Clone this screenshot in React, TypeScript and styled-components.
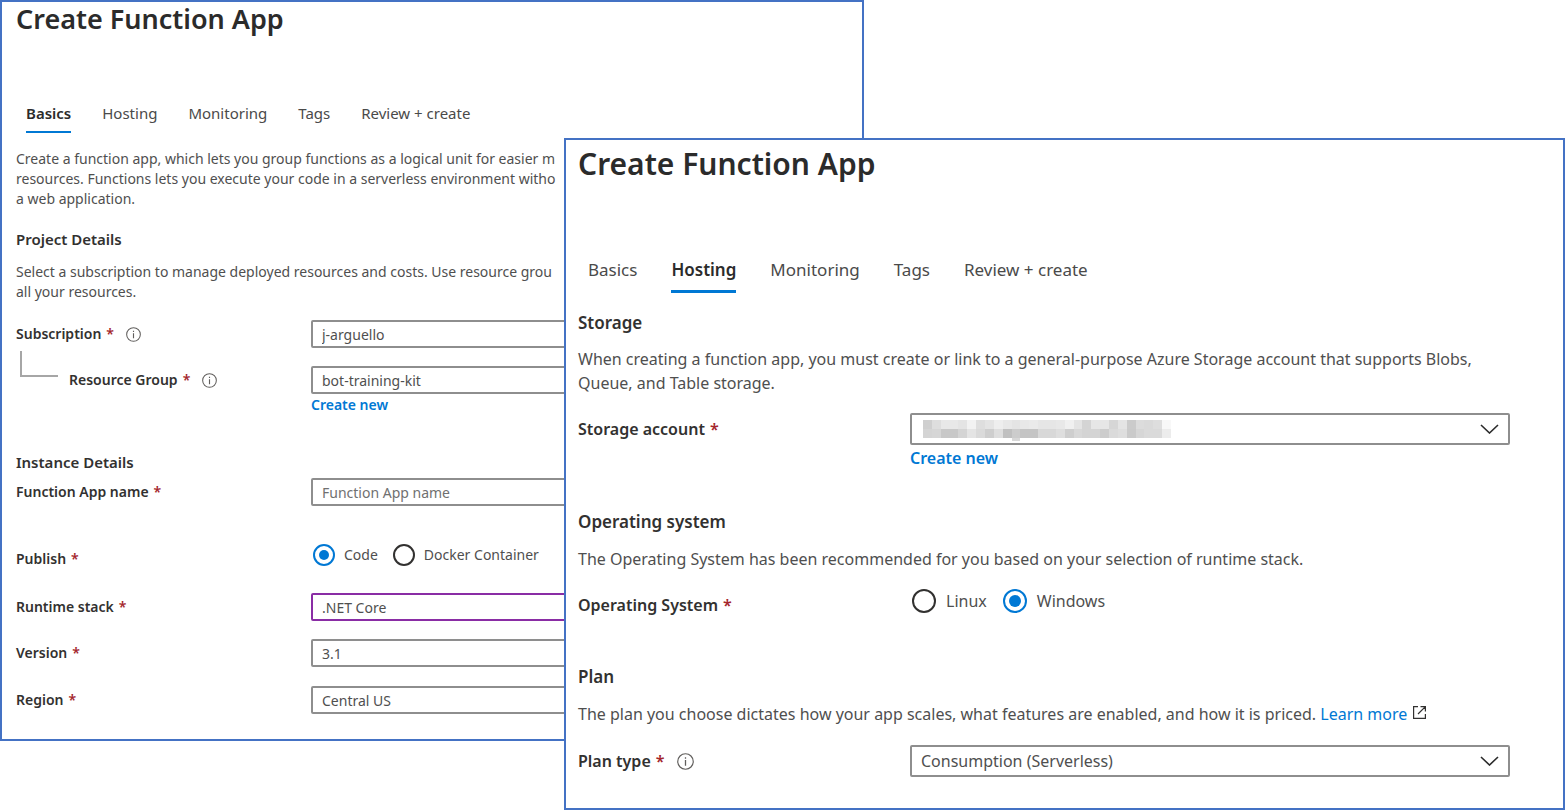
import React, { useState } from "react";
import styled, { createGlobalStyle, ThemeProvider } from "styled-components";

const GlobalStyle = createGlobalStyle`
  *, *::before, *::after { box-sizing: border-box; }
  body { margin: 0; background: #fff; }
`;

const compact = {
  title: 27, titleLine: 34, tabsTop: 65, tab: 15, tabPad: 6, tabBar: 2, tabGap: 31, heading: 15,
  text: 14, line: 20, label: 295, field: 28, radio: 22, dot: 10, info: 15, inset: 14, right: 14, radioGap: 9, radioStep: 15,
};
const roomy = {
  title: 30, titleLine: 48, tabsTop: 70, tab: 17, tabPad: 8, tabBar: 3, tabGap: 34, heading: 17,
  text: 16, line: 24, label: 332, field: 32, radio: 24, dot: 12, info: 17, inset: 12, right: 53, radioGap: 10, radioStep: 16,
};

const Stage = styled.main`
  display: grid;
  grid-template-columns: 564fr 300fr 701fr;
  align-items: start;
  font-family: "Noto Sans", "Open Sans", sans-serif;
  color: #4f4f4f;
`;

const Panel = styled.section<{ $front?: boolean }>`
  grid-row: 1;
  grid-column: ${(p) => (p.$front ? "2 / 4" : "1 / 3")};
  margin-top: ${(p) => (p.$front ? 138 : 0)}px;
  z-index: ${(p) => (p.$front ? 1 : 0)};
  min-width: 0;
  overflow: hidden;
  border: 2px solid #4472c4;
  background: #fff;
  padding: 0 ${(p) => p.theme.right}px ${(p) => (p.$front ? 31 : 25)}px ${(p) => p.theme.inset}px;
  font-size: ${(p) => p.theme.text}px;
  line-height: ${(p) => p.theme.line}px;
`;

const Title = styled.h1`
  margin: 0;
  color: #2b2b2b;
  font-size: ${(p) => p.theme.title}px;
  line-height: ${(p) => p.theme.titleLine}px;
  font-weight: 600;
`;

const Tabs = styled.nav`
  display: flex;
  gap: ${(p) => p.theme.tabGap}px;
  margin-top: ${(p) => p.theme.tabsTop}px;
  padding-left: 10px;
`;

const Tab = styled.button<{ $active: boolean }>`
  padding: 0 0 ${(p) => p.theme.tabPad}px;
  border: 0;
  border-bottom: ${(p) => p.theme.tabBar}px solid ${(p) => (p.$active ? "#0078d4" : "transparent")};
  background: none;
  color: ${(p) => (p.$active ? "#2b2b2b" : "#4a4a4a")};
  font-family: inherit;
  font-size: ${(p) => p.theme.tab}px;
  font-weight: ${(p) => (p.$active ? 600 : 400)};
  line-height: 24px;
  white-space: nowrap;
`;

const Heading = styled.h2<{ $top: number }>`
  margin: ${(p) => p.$top}px 0 0;
  color: #323130;
  font-size: ${(p) => p.theme.heading}px;
  font-weight: 600;
`;

const Text = styled.p<{ $top: number }>`
  margin: ${(p) => p.$top}px 0 0;
`;

const Row = styled.div<{ $top: number }>`
  display: flex;
  margin-top: ${(p) => p.$top}px;
`;

const LabelCell = styled.div<{ $low?: boolean }>`
  display: flex;
  flex: none;
  align-items: center;
  width: ${(p) => p.theme.label}px;
  height: ${(p) => p.theme.field}px;
  padding-top: ${(p) => (p.$low ? 8 : 0)}px;
  color: #323130;
  font-weight: 600;
`;

const Star = styled.span`
  margin-left: 5px;
  color: #a4262c;
`;

const Branch = styled.span`
  align-self: flex-start;
  width: 38px;
  height: 26px;
  margin: -15px 11px 0 4px;
  border: solid #a6a6a6;
  border-width: 0 0 2px 2px;
`;

const InfoIcon = styled.svg`
  width: ${(p) => p.theme.info}px;
  height: ${(p) => p.theme.info}px;
  margin-left: 12px;
`;

const FieldCell = styled.div`
  flex: 1;
  min-width: 0;
`;

const Box = styled.div`
  position: relative;
`;

const fieldCss = (p: any) => `
  display: block;
  appearance: none;
  width: 100%;
  height: ${p.theme.field}px;
  margin: 0;
  padding: 0 9px;
  border: 2px solid ${p.$focus ? "#8a2da5" : "#8e8e8e"};
  border-radius: 2px;
  outline: none;
  background: #fff;
  color: #4f4f4f;
  font-family: inherit;
  font-size: ${p.theme.text}px;
`;
const Select = styled.select<{ $focus?: boolean }>`${fieldCss}`;
const Input = styled.input`
  ${fieldCss}
  &::placeholder { color: #707070; opacity: 1; }
`;

const Chevron = styled.svg`
  position: absolute;
  top: 50%;
  right: 11px;
  width: 19px;
  height: 10px;
  margin-top: -5px;
  pointer-events: none;
`;

const Mosaic = styled.svg`
  position: absolute;
  top: 7px;
  left: 13px;
  width: 248px;
  height: 21px;
  pointer-events: none;
`;

const Link = styled.a<{ $strong?: boolean }>`
  color: #0078d4;
  font-weight: ${(p) => (p.$strong ? 600 : 400)};
  text-decoration: none;
`;

const Below = styled.div`
  margin-top: 1px;
`;

const Radios = styled.div`
  display: flex;
  align-items: center;
  height: ${(p) => p.theme.field}px;
  padding-left: 2px;
  gap: ${(p) => p.theme.radioStep}px;
`;

const RadioLabel = styled.label`
  display: flex;
  align-items: center;
  gap: ${(p) => p.theme.radioGap}px;
  white-space: nowrap;
`;

const Radio = styled.input`
  appearance: none;
  display: grid;
  place-items: center;
  flex: none;
  width: ${(p) => p.theme.radio}px;
  height: ${(p) => p.theme.radio}px;
  margin: 0;
  border: 2px solid #323130;
  border-radius: 50%;
  &:checked { border-color: #0078d4; }
  &:checked::before {
    content: "";
    width: ${(p) => p.theme.dot}px;
    height: ${(p) => p.theme.dot}px;
    border-radius: 50%;
    background: #0078d4;
  }
`;

const External = styled.svg`
  width: 15px;
  height: 15px;
  margin-left: 5px;
`;

const TAB_NAMES = ["Basics", "Hosting", "Monitoring", "Tags", "Review + create"];

function TabBar({ initial }: { initial: string }) {
  const [active, setActive] = useState(initial);
  return (
    <Tabs>
      {TAB_NAMES.map((name) => (
        <Tab key={name} type="button" $active={name === active} onClick={() => setActive(name)}>
          {name}
        </Tab>
      ))}
    </Tabs>
  );
}

function Info() {
  return (
    <InfoIcon viewBox="0 0 16 16" fill="none" stroke="#605e5c" aria-hidden="true">
      <circle cx="8" cy="8" r="7.3" strokeWidth="1.1" />
      <path d="M8 6.7V12M8 4v1.4" strokeWidth="1.2" />
    </InfoIcon>
  );
}

type FieldRowProps = {
  id: string;
  label: string;
  top: number;
  info?: boolean;
  branch?: boolean;
  createNew?: boolean;
  children: React.ReactNode;
};

function FieldRow({ id, label, top, info, branch, createNew, children }: FieldRowProps) {
  return (
    <Row $top={top}>
      <LabelCell>
        {branch && <Branch />}
        <label htmlFor={id}>
          {label}
          <Star>*</Star>
        </label>
        {info && <Info />}
      </LabelCell>
      <FieldCell>
        <Box>{children}</Box>
        {createNew && (
          <Below>
            <Link href="#" $strong>Create new</Link>
          </Below>
        )}
      </FieldCell>
    </Row>
  );
}

function Dropdown({ id, value, focus }: { id: string; value: string; focus?: boolean }) {
  return (
    <>
      <Select id={id} $focus={focus}>
        <option>{value}</option>
      </Select>
      <Chevron viewBox="0 0 19 10" fill="none" stroke="#2b2b2b" strokeWidth="1.6" aria-hidden="true">
        <path d="M1 1l8.5 8L18 1" />
      </Chevron>
    </>
  );
}

function RadioRow({ name, label, options, initial, top }: { name: string; label: string; options: string[]; initial: string; top: number }) {
  const [value, setValue] = useState(initial);
  return (
    <Row $top={top} role="radiogroup" aria-labelledby={name + "-label"}>
      <LabelCell $low>
        <span id={name + "-label"}>
          {label}
          <Star>*</Star>
        </span>
      </LabelCell>
      <Radios>
        {options.map((o) => (
          <RadioLabel key={o}>
            <Radio type="radio" name={name} checked={o === value} onChange={() => setValue(o)} />
            {o}
          </RadioLabel>
        ))}
      </Radios>
    </Row>
  );
}

// Grey levels of the pixelated account name, one list per mosaic row.
const MOSAIC_ROWS = [
  [207, 222, 232, 232, 228, 242, 222, 228, 238, 232, 228, 232, 234, 230, 230, 232, 240, 228, 212, 230, 230, 214, 228, 203, 220, 218, 222, 248],
  [212, 214, 200, 200, 212, 228, 218, 206, 222, 192, 204, 196, 196, 216, 216, 222, 206, 216, 212, 212, 204, 218, 222, 202, 214, 218, 218, 236],
];

function HiddenName() {
  return (
    <Mosaic viewBox="0 0 28 21" preserveAspectRatio="none" shapeRendering="crispEdges" aria-hidden="true">
      {MOSAIC_ROWS.map((row, y) =>
        row.map((g, x) => <rect key={x + "-" + y} x={x} y={y * 9} width="1" height="9" fill={`rgb(${g},${g},${g})`} />)
      )}
      <rect x="10" y="18" width="1" height="3" fill="#d8d8d8" />
    </Mosaic>
  );
}

function BasicsPanel() {
  return (
    <ThemeProvider theme={compact}>
      <Panel>
        <Title>Create Function App</Title>
        <TabBar initial="Basics" />
        <Text $top={16}>
          Create a function app, which lets you group functions as a logical unit for easier m
          <br />
          resources. Functions lets you execute your code in a serverless environment witho
          <br />a web application.
        </Text>
        <Heading $top={20}>Project Details</Heading>
        <Text $top={13}>
          Select a subscription to manage deployed resources and costs. Use resource grou
          <br />
          all your resources.
        </Text>
        <FieldRow id="subscription" label="Subscription" top={18} info>
          <Dropdown id="subscription" value="j-arguello" />
        </FieldRow>
        <FieldRow id="group" label="Resource Group" top={18} info branch createNew>
          <Dropdown id="group" value="bot-training-kit" />
        </FieldRow>
        <Heading $top={37}>Instance Details</Heading>
        <FieldRow id="app-name" label="Function App name" top={6}>
          <Input id="app-name" type="text" placeholder="Function App name" />
        </FieldRow>
        <RadioRow name="publish" label="Publish" options={["Code", "Docker Container"]} initial="Code" top={35} />
        <FieldRow id="runtime" label="Runtime stack" top={24}>
          <Dropdown id="runtime" value=".NET Core" focus />
        </FieldRow>
        <FieldRow id="version" label="Version" top={18}>
          <Dropdown id="version" value="3.1" />
        </FieldRow>
        <FieldRow id="region" label="Region" top={19}>
          <Dropdown id="region" value="Central US" />
        </FieldRow>
      </Panel>
    </ThemeProvider>
  );
}

function HostingPanel() {
  return (
    <ThemeProvider theme={roomy}>
      <Panel $front>
        <Title>Create Function App</Title>
        <TabBar initial="Hosting" />
        <Heading $top={18}>Storage</Heading>
        <Text $top={12}>
          When creating a function app, you must create or link to a general-purpose Azure Storage account that supports Blobs,
          Queue, and Table storage.
        </Text>
        <FieldRow id="storage" label="Storage account" top={18} createNew>
          <Dropdown id="storage" value="" />
          <HiddenName />
        </FieldRow>
        <Heading $top={40}>Operating system</Heading>
        <Text $top={13}>The Operating System has been recommended for you based on your selection of runtime stack.</Text>
        <RadioRow name="os" label="Operating System" options={["Linux", "Windows"]} initial="Windows" top={14} />
        <Heading $top={48}>Plan</Heading>
        <Text $top={13}>
          The plan you choose dictates how your app scales, what features are enabled, and how it is priced.{" "}
          <Link href="#">
            Learn more
            <External viewBox="0 0 15 15" fill="none" stroke="#323130" strokeWidth="1.2" aria-hidden="true">
              <path d="M6 1.6H1.6v11.8h11.8V9M8.5 1.6h4.9v4.9M13.4 1.6L6 9" />
            </External>
          </Link>
        </Text>
        <FieldRow id="plan" label="Plan type" top={19} info>
          <Dropdown id="plan" value="Consumption (Serverless)" />
        </FieldRow>
      </Panel>
    </ThemeProvider>
  );
}

export default function App() {
  return (
    <Stage>
      <GlobalStyle />
      <BasicsPanel />
      <HostingPanel />
    </Stage>
  );
}
